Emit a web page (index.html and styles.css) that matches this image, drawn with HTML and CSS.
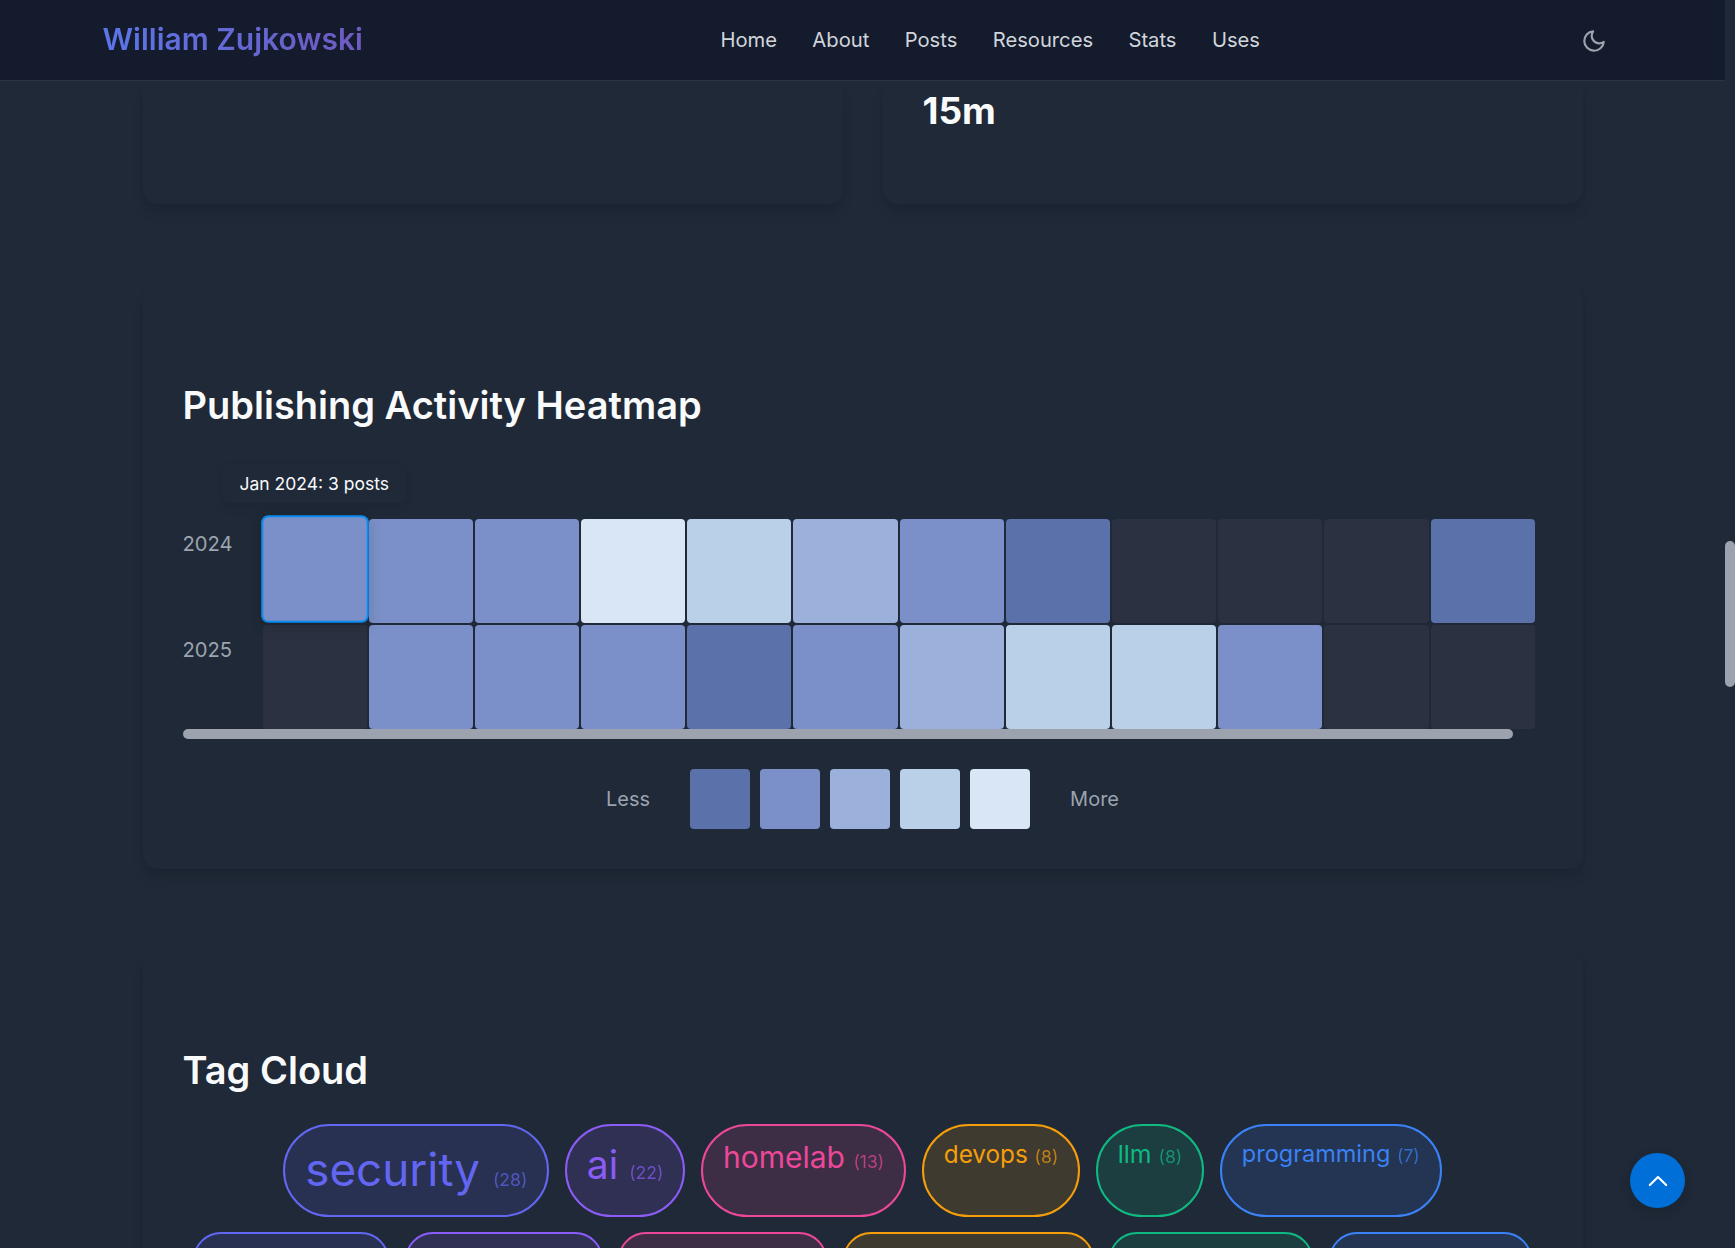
FILE: index.html
```html
<!DOCTYPE html>
<html lang="en">
<head>
<meta charset="utf-8">
<title>Stats - William Zujkowski</title>
<link rel="stylesheet" href="styles.css">
</head>
<body>
<div class="viewport">
  <div class="page">
    <header class="site-header">
      <a class="logo">William Zujkowski</a>
      <nav class="nav">
        <a>Home</a><a>About</a><a>Posts</a><a>Resources</a><a>Stats</a><a>Uses</a>
      </nav>
      <button class="theme-btn" aria-label="Toggle theme">
        <svg viewBox="0 0 24 24" class="moon"><path d="M21 12.79A9 9 0 1 1 11.21 3 7 7 0 0 0 21 12.79z"/></svg>
      </button>
    </header>
    <main class="main">
      <div class="stat-row">
        <div class="card stat-card"></div>
        <div class="card stat-card"><div class="stat-value">15m</div></div>
      </div>
      <section class="card section heat-section">
        <h2 class="section-title">Publishing Activity Heatmap</h2>
        <div class="heat-wrap">
          <div class="tooltip">Jan 2024: 3 posts</div>
          <div class="heat-rows">
            <div class="heat-row">
              <div class="year">2024</div>
              <div class="cell l2 hover"></div><div class="cell l2"></div><div class="cell l2"></div><div class="cell l5"></div><div class="cell l4"></div><div class="cell l3"></div><div class="cell l2"></div><div class="cell l1"></div><div class="cell l0"></div><div class="cell l0"></div><div class="cell l0"></div><div class="cell l1"></div>
            </div>
            <div class="heat-row">
              <div class="year">2025</div>
              <div class="cell l0"></div><div class="cell l2"></div><div class="cell l2"></div><div class="cell l2"></div><div class="cell l1"></div><div class="cell l2"></div><div class="cell l3"></div><div class="cell l4"></div><div class="cell l4"></div><div class="cell l2"></div><div class="cell l0"></div><div class="cell l0"></div>
            </div>
          </div>
          <div class="h-thumb"></div>
        </div>
        <div class="legend">
          <span class="legend-label">Less</span>
          <div class="swatches">
            <div class="swatch l1"></div><div class="swatch l2"></div><div class="swatch l3"></div><div class="swatch l4"></div><div class="swatch l5"></div>
          </div>
          <span class="legend-label">More</span>
        </div>
      </section>
      <section class="card section tag-section">
        <h2 class="section-title">Tag Cloud</h2>
        <div class="tags">
          <a class="tag indigo s1">security <span class="count">(28)</span></a>
          <a class="tag violet s2">ai <span class="count">(22)</span></a>
          <a class="tag pink s3">homelab <span class="count">(13)</span></a>
          <a class="tag amber s4">devops <span class="count">(8)</span></a>
          <a class="tag green s6">llm <span class="count">(8)</span></a>
          <a class="tag blue s5">programming <span class="count">(7)</span></a>
        </div>
        <div class="tags tags-next">
          <a class="tag indigo w1"></a>
          <a class="tag violet w2"></a>
          <a class="tag pink w3"></a>
          <a class="tag amber w4"></a>
          <a class="tag green w5"></a>
          <a class="tag blue w6"></a>
        </div>
      </section>
    </main>
    <button class="to-top" aria-label="Back to top">
      <svg viewBox="0 0 24 24" class="chevron"><path d="M5 15.5l7-7 7 7"/></svg>
    </button>
  </div>
  <div class="v-track"><div class="v-thumb"></div></div>
</div>
</body>
</html>
```
FILE: styles.css
```css
* { box-sizing: border-box; }
html, body { margin: 0; padding: 0; height: 1248px; overflow: hidden; background: #1f2937; }
body { font-family: Inter, "Noto Sans", sans-serif; color: #f9fafb; }
.viewport { display: flex; width: 1735px; height: 1248px; overflow: hidden; }
.page { position: relative; width: 1725px; flex: none; height: 1248px; overflow: hidden; }

.v-track { width: 10px; flex: none; padding-top: 541px; background: #1f2937; }
.v-thumb { width: 10px; height: 146px; border-radius: 5px; background: #9ca3af; }

.site-header { position: relative; z-index: 2; display: flex; align-items: center; height: 81px; padding-left: 102.5px; padding-bottom: 1px; background: #141b2d; border-bottom: 1px solid #2b3444; }
.logo { margin-bottom: 2px; font-size: 30px; font-weight: 600; line-height: 40px; background: linear-gradient(90deg, #5a76e8, #6f5ac0); -webkit-background-clip: text; background-clip: text; color: transparent; }
.nav { display: flex; gap: 35.4px; margin-left: 357.5px; font-size: 20.2px; color: #d1d5db; }
.theme-btn { display: flex; margin-left: auto; margin-right: 118px; margin-top: 2px; padding: 0; border: 0; background: none; }
.moon { width: 26px; height: 26px; fill: none; stroke: #9ca3af; stroke-width: 2; stroke-linecap: round; stroke-linejoin: round; }

.main { display: flex; flex-direction: column; gap: 80px; width: 1440px; margin: 0 auto; }
.card { background: #1f2937; border-radius: 0 0 14px 14px; box-shadow: 0 10px 15px -3px rgba(0, 0, 0, 0.1), 0 4px 6px -2px rgba(0, 0, 0, 0.05); }
.stat-row { display: flex; gap: 40px; }
.stat-card { flex: 1; height: 123px; padding: 4px 40px 0; }
.stat-value { font-size: 37px; font-weight: 700; line-height: 52px; }

.section { border-radius: 14px; padding: 0 40px; }
.heat-section { height: 585px; padding-top: 92px; }
.section-title { margin: 0; font-size: 38px; font-weight: 600; line-height: 58px; color: #f9fafb; }

.heat-wrap { position: relative; margin-top: 85px; }
.heat-rows { display: flex; flex-direction: column; gap: 2px; }
.heat-row { display: flex; gap: 2px; }
.year { width: 78px; font-size: 20.2px; line-height: 50px; color: #9ca3af; }
.cell { width: 104.2px; height: 104px; border-radius: 4px; }
.hover { position: relative; z-index: 1; border: 2.5px solid #0a8bef; border-radius: 7px; transform: translateY(-2px) scale(1.035); box-shadow: 0 4px 12px rgba(0, 0, 0, 0.15); }
.l0 { background: #2b3140; }
.l1 { background: #5b71a9; }
.l2 { background: #7b90c8; }
.l3 { background: #9bb0db; }
.l4 { background: #bad0e9; }
.l5 { background: #d9e6f6; }
.h-thumb { width: 1330px; height: 10px; border-radius: 5px; background: #9ca3af; }
.tooltip { position: absolute; left: 40px; top: -54px; padding: 0 17px; height: 38px; font-size: 17.5px; line-height: 38px; color: #f9fafb; background: #1f2937; border-radius: 6px; box-shadow: 0 4px 12px rgba(0, 0, 0, 0.08); white-space: nowrap; }

.legend { display: flex; align-items: center; justify-content: center; gap: 40px; margin-top: 30px; }
.legend-label { font-size: 20px; color: #9ca3af; }
.swatches { display: flex; gap: 10px; }
.swatch { width: 60px; height: 60px; border-radius: 4px; }

.tag-section { height: 400px; padding-top: 92px; }
.tags { display: flex; justify-content: center; gap: 15.5px; margin-top: 25px; }
.tags-next { margin-top: 15px; }
.tag { min-height: 93px; padding: 11.5px 20px 0; border: 2px solid; border-radius: 50px; line-height: 1.4; white-space: nowrap; }
.count { font-size: 17.6px; opacity: 0.7; }
.s1 { font-size: 45.8px; }
.s2 { font-size: 39px; }
.s3 { font-size: 30px; padding-top: 9.5px; }
.s4 { font-size: 24.3px; padding-top: 10.5px; }
.s5 { font-size: 23.5px; }
.s6 { font-size: 24.8px; padding-top: 10.5px; }
.tags-next .tag { min-height: 56px; }
.w1 { width: 196px; }
.w2 { width: 198px; }
.w3 { width: 209px; }
.w4 { width: 251px; }
.w5 { width: 204px; }
.w6 { width: 203px; }
.indigo { color: #6366f1; border-color: #6366f1; background: rgba(99, 102, 241, 0.15); }
.violet { color: #8b5cf6; border-color: #8b5cf6; background: rgba(139, 92, 246, 0.15); }
.pink { color: #ec4899; border-color: #ec4899; background: rgba(236, 72, 153, 0.15); }
.amber { color: #f59e0b; border-color: #f59e0b; background: rgba(245, 158, 11, 0.15); }
.green { color: #10b981; border-color: #10b981; background: rgba(16, 185, 129, 0.15); }
.blue { color: #3b82f6; border-color: #3b82f6; background: rgba(59, 130, 246, 0.15); }

.to-top { position: absolute; right: 40px; bottom: 40px; z-index: 3; display: flex; align-items: center; justify-content: center; width: 55px; height: 55px; padding: 0; border: 0; border-radius: 50%; background: #0070d8; box-shadow: 0 4px 12px rgba(0, 0, 0, 0.15); }
.chevron { width: 28px; height: 28px; fill: none; stroke: #fff; stroke-width: 1.8; stroke-linecap: round; stroke-linejoin: round; }
```
